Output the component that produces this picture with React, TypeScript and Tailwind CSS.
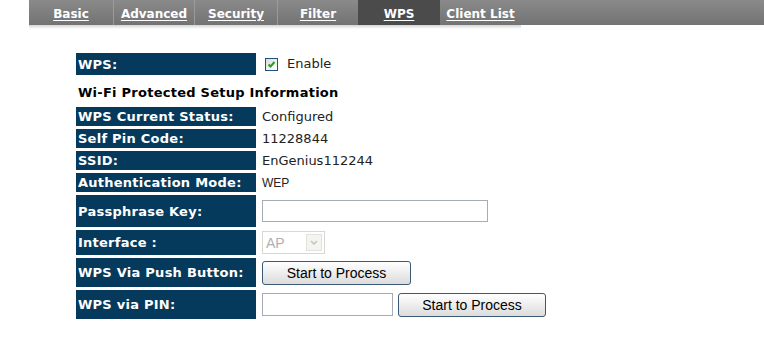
import React from "react";

const tabs = [
  { name: "Basic", w: "w-[84px]" },
  { name: "Advanced", w: "w-[81px]" },
  { name: "Security", w: "w-[83px]" },
  { name: "Filter", w: "w-[81px]" },
  { name: "WPS", w: "w-[82px]", active: true },
  { name: "Client List", w: "w-[81px]" },
];

function Label({ children }: { children: React.ReactNode }) {
  return (
    <div className="w-[180px] shrink-0 bg-[#053a5c] text-white font-bold text-[13px] tracking-[0.25px] pl-[2px] flex items-center leading-none [font-family:'DejaVu_Sans',sans-serif]">
      {children}
    </div>
  );
}

function Btn({ w }: { w: string }) {
  return (
    <button
      className={`${w} h-[24px] rounded-[3px] border border-[#3a5a78] bg-gradient-to-b from-white to-[#dcdcdc] text-[14px] text-black leading-none [font-family:'Liberation_Sans',Arial,sans-serif]`}
    >
      Start to Process
    </button>
  );
}

export default function App() {
  return (
    <div className="w-[764px] h-[355px] bg-white overflow-hidden relative">
      {/* tab bar */}
      <div className="ml-[29px] flex flex-col">
        <div className="flex h-[25px] bg-gradient-to-b from-[#8a8a8a] to-[#737373]">
          {tabs.map((t, i) => (
            <div
              key={t.name}
              className={`${t.w} flex items-center justify-center pt-[2px] ${
                t.active ? "bg-[#4b4b4b]" : ""
              } ${i > 0 && !t.active && !tabs[i - 1].active ? "border-l border-[#9a9a9a]" : ""}`}
            >
              <span className="text-white font-bold text-[12px] underline underline-offset-[2px] [font-family:'DejaVu_Sans',sans-serif] leading-none">
                {t.name}
              </span>
            </div>
          ))}
        </div>
        <div className="h-[4px] w-[492px] bg-gradient-to-b from-[#d4d4d4] to-white" />
      </div>

      {/* form */}
      <div className="ml-[76px] mt-[24px] flex flex-col gap-[3px]">
        <div className="flex h-[22px]">
          <Label>WPS:</Label>
          <div className="flex items-center pl-[9px] gap-[9px]">
            <div className="w-[13px] h-[13px] border border-[#1c5180] bg-gradient-to-br from-[#dcdcd6] to-white flex items-center justify-center">
              <svg width="9" height="9" viewBox="0 0 9 9">
                <path d="M1.5 4.5 L3.5 6.5 L7.5 2" stroke="#21a121" strokeWidth="2" fill="none" />
              </svg>
            </div>
            <span className="text-[13px] text-[#222] [font-family:'DejaVu_Sans',sans-serif]">Enable</span>
          </div>
        </div>
        <div className="h-[26px] flex items-center pt-[4px] pl-[2px] text-[13px] tracking-[0.25px] font-bold text-black [font-family:'DejaVu_Sans',sans-serif]">
          Wi-Fi Protected Setup Information
        </div>
        {[
          ["WPS Current Status:", "Configured"],
          ["Self Pin Code:", "11228844"],
          ["SSID:", "EnGenius112244"],
        ].map(([l, v]) => (
          <div key={l} className="flex h-[19px]">
            <Label>{l}</Label>
            <div className="flex items-center pl-[6px] text-[13px] text-[#222] [font-family:'DejaVu_Sans',sans-serif]">{v}</div>
          </div>
        ))}
        <div className="flex h-[19px]">
          <Label>Authentication Mode:</Label>
          <div className="flex items-center pl-[6px] text-[12px] text-[#222] [font-family:'Liberation_Sans',Arial,sans-serif]">WEP</div>
        </div>
        <div className="flex h-[32px]">
          <Label>Passphrase Key:</Label>
          <div className="flex items-center pl-[6px]">
            <div className="w-[226px] h-[22px] border border-[#a5acb5] bg-white" />
          </div>
        </div>
        <div className="flex h-[25px]">
          <Label>Interface :</Label>
          <div className="flex items-center pl-[6px]">
            <div className="w-[63px] h-[23px] border border-[#d8d8d0] bg-white flex items-center justify-between pl-[3px] pr-[2px]">
              <span className="text-[14px] text-[#b0b0b0] leading-none [font-family:'Liberation_Sans',Arial,sans-serif]">AP</span>
              <div className="w-[16px] h-[17px] bg-[#f4f4f0] border border-[#e2e2dc] flex items-center justify-center">
                <svg width="8" height="5" viewBox="0 0 8 5">
                  <path d="M1 1 L4 4 L7 1" stroke="#c0c0c0" strokeWidth="1.4" fill="none" />
                </svg>
              </div>
            </div>
          </div>
        </div>
        <div className="flex h-[29px]">
          <Label>WPS Via Push Button:</Label>
          <div className="flex items-center pl-[6px]">
            <Btn w="w-[149px]" />
          </div>
        </div>
        <div className="flex h-[29px]">
          <Label>WPS via PIN:</Label>
          <div className="flex items-center pl-[6px] gap-[5px]">
            <div className="w-[131px] h-[23px] border border-[#a5acb5] bg-white" />
            <Btn w="w-[148px]" />
          </div>
        </div>
      </div>
    </div>
  );
}
